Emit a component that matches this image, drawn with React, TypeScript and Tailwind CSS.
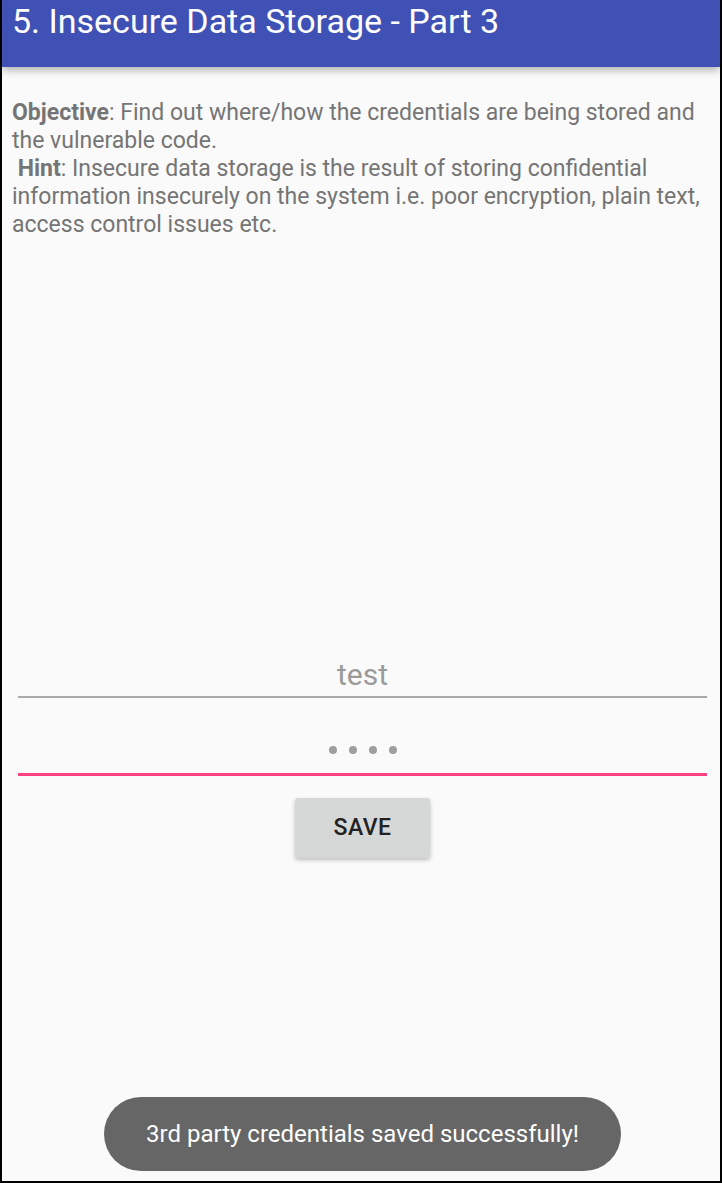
import React from "react";

export default function App() {
  return (
    <div
      className="relative w-[722px] h-[1183px] bg-[#fafafa] border-x-2 border-b-2 border-black overflow-hidden"
      style={{ fontFamily: "Roboto, 'Liberation Sans', sans-serif" }}
    >
      <header className="relative z-10 h-[67px] bg-[#3f51b5] shadow-[0_3px_8px_rgba(0,0,0,0.3)] px-[10px] pt-[1px]">
        <h1 className="text-white text-[34px] leading-[40px] font-normal">
          5. Insecure Data Storage - Part 3
        </h1>
      </header>

      <div className="px-[10px] pt-[32px] text-[23px] leading-[28px] text-[#757575]">
        <p>
          <b className="font-bold">Objective</b>: Find out where/how the credentials are being stored and the vulnerable code.
          <br />
          &nbsp;<b className="font-bold">Hint</b>: Insecure data storage is the result of storing confidential information insecurely on the system i.e. poor encryption, plain text, access control issues etc.
        </p>
      </div>

      <div className="mt-[412px] pl-[16px] pr-[13px] flex flex-col">
        <div className="h-[47px] border-b-2 border-[#a9a9a9] flex items-start justify-center pt-[6px]">
          <span className="text-[30px] leading-[36px] text-[#9b9b9b]">test</span>
        </div>
        <div className="h-[78px] border-b-[3px] border-[#ff4081] flex items-center justify-center gap-[12px] pt-[28px]">
          <span className="w-[8px] h-[8px] rounded-full bg-[#9e9e9e]" />
          <span className="w-[8px] h-[8px] rounded-full bg-[#9e9e9e]" />
          <span className="w-[8px] h-[8px] rounded-full bg-[#9e9e9e]" />
          <span className="w-[8px] h-[8px] rounded-full bg-[#9e9e9e]" />
        </div>
        <div className="flex justify-center mt-[22px]">
          <button className="w-[135px] h-[60px] bg-[#d6d7d7] rounded-[3px] shadow-[0_2px_4px_rgba(0,0,0,0.25)] text-[#222] text-[23px] font-medium tracking-[0.5px]">
            SAVE
          </button>
        </div>
      </div>

      <div className="absolute left-[102px] bottom-[10px] w-[517px] h-[74px] rounded-full bg-[#666666] flex items-center justify-center">
        <span className="text-white text-[24px] leading-[30px]">3rd party credentials saved successfully!</span>
      </div>
    </div>
  );
}
